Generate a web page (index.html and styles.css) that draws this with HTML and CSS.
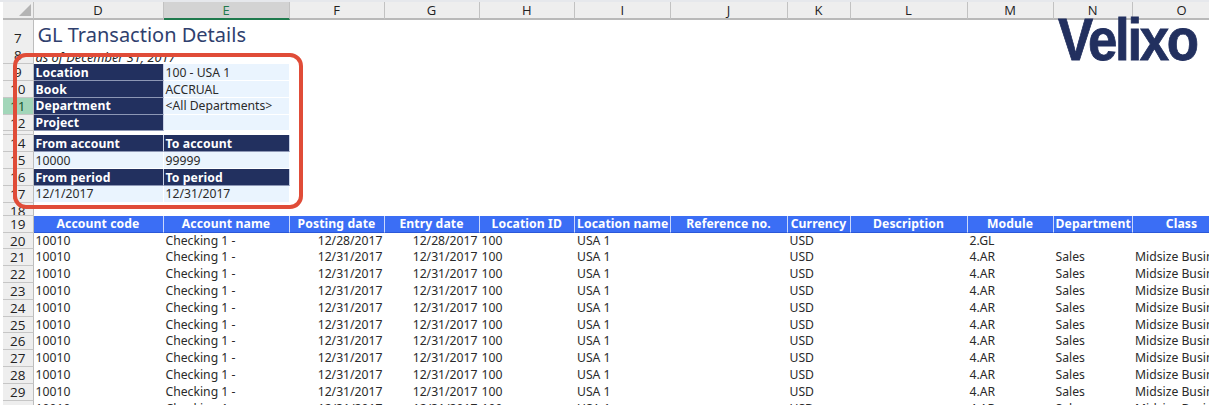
FILE: index.html
```html
<!DOCTYPE html>
<html lang="en">
<head>
<meta charset="utf-8">
<title>GL Transaction Details</title>
<link rel="stylesheet" href="styles.css">
</head>
<body>
<div class="sheet">
  <div class="row col-head">
    <div class="corner"><svg class="corner-mark" width="12" height="12" viewBox="0 0 12 12"><path d="M12 0V12H0Z" fill="#b4b4b4"/></svg></div>
    <div>D</div><div class="col-sel">E</div><div>F</div><div>G</div><div>H</div><div>I</div><div>J</div><div>K</div><div>L</div><div>M</div><div>N</div><div>O</div>
  </div>
  <div class="row r-title"><div class="rn">7</div><div class="title">GL Transaction Details</div></div>
  <div class="row"><div class="rn">8</div><div class="subtitle">as of December 31, 2017</div></div>
  <div class="row"><div class="rn">9</div><div class="lab">Location</div><div class="val">100 - USA 1</div></div>
  <div class="row"><div class="rn">10</div><div class="lab">Book</div><div class="val">ACCRUAL</div></div>
  <div class="row"><div class="rn rn-sel">11</div><div class="lab">Department</div><div class="val">&lt;All Departments&gt;</div></div>
  <div class="row"><div class="rn">12</div><div class="lab">Project</div><div class="val"></div></div>
  <div class="row r-thin"><div class="rn"></div></div>
  <div class="row"><div class="rn">14</div><div class="lab">From account</div><div class="lab">To account</div></div>
  <div class="row"><div class="rn">15</div><div class="val">10000</div><div class="val">99999</div></div>
  <div class="row"><div class="rn">16</div><div class="lab">From period</div><div class="lab">To period</div></div>
  <div class="row"><div class="rn">17</div><div class="val">12/1/2017</div><div class="val">12/31/2017</div></div>
  <div class="row r-gap"><div class="rn">18</div></div>
  <div class="row r-head">
    <div class="rn">19</div>
    <div class="th">Account code</div><div class="th">Account name</div><div class="th">Posting date</div><div class="th">Entry date</div><div class="th">Location ID</div><div class="th">Location name</div><div class="th">Reference no.</div><div class="th">Currency</div><div class="th">Description</div><div class="th">Module</div><div class="th">Department</div><div class="th">Class</div>
  </div>
  <div class="row"><div class="rn">20</div><div>10010</div><div>Checking 1 -</div><div class="num">12/28/2017</div><div class="num">12/28/2017</div><div>100</div><div>USA 1</div><div></div><div>USD</div><div></div><div>2.GL</div></div>
  <div class="row"><div class="rn">21</div><div>10010</div><div>Checking 1 -</div><div class="num">12/31/2017</div><div class="num">12/31/2017</div><div>100</div><div>USA 1</div><div></div><div>USD</div><div></div><div>4.AR</div><div>Sales</div><div>Midsize Business</div></div>
  <div class="row"><div class="rn">22</div><div>10010</div><div>Checking 1 -</div><div class="num">12/31/2017</div><div class="num">12/31/2017</div><div>100</div><div>USA 1</div><div></div><div>USD</div><div></div><div>4.AR</div><div>Sales</div><div>Midsize Business</div></div>
  <div class="row"><div class="rn">23</div><div>10010</div><div>Checking 1 -</div><div class="num">12/31/2017</div><div class="num">12/31/2017</div><div>100</div><div>USA 1</div><div></div><div>USD</div><div></div><div>4.AR</div><div>Sales</div><div>Midsize Business</div></div>
  <div class="row"><div class="rn">24</div><div>10010</div><div>Checking 1 -</div><div class="num">12/31/2017</div><div class="num">12/31/2017</div><div>100</div><div>USA 1</div><div></div><div>USD</div><div></div><div>4.AR</div><div>Sales</div><div>Midsize Business</div></div>
  <div class="row"><div class="rn">25</div><div>10010</div><div>Checking 1 -</div><div class="num">12/31/2017</div><div class="num">12/31/2017</div><div>100</div><div>USA 1</div><div></div><div>USD</div><div></div><div>4.AR</div><div>Sales</div><div>Midsize Business</div></div>
  <div class="row"><div class="rn">26</div><div>10010</div><div>Checking 1 -</div><div class="num">12/31/2017</div><div class="num">12/31/2017</div><div>100</div><div>USA 1</div><div></div><div>USD</div><div></div><div>4.AR</div><div>Sales</div><div>Midsize Business</div></div>
  <div class="row"><div class="rn">27</div><div>10010</div><div>Checking 1 -</div><div class="num">12/31/2017</div><div class="num">12/31/2017</div><div>100</div><div>USA 1</div><div></div><div>USD</div><div></div><div>4.AR</div><div>Sales</div><div>Midsize Business</div></div>
  <div class="row"><div class="rn">28</div><div>10010</div><div>Checking 1 -</div><div class="num">12/31/2017</div><div class="num">12/31/2017</div><div>100</div><div>USA 1</div><div></div><div>USD</div><div></div><div>4.AR</div><div>Sales</div><div>Midsize Business</div></div>
  <div class="row"><div class="rn">29</div><div>10010</div><div>Checking 1 -</div><div class="num">12/31/2017</div><div class="num">12/31/2017</div><div>100</div><div>USA 1</div><div></div><div>USD</div><div></div><div>4.AR</div><div>Sales</div><div>Midsize Business</div></div>
  <div class="row"><div class="rn">30</div><div>10010</div><div>Checking 1 -</div><div class="num">12/31/2017</div><div class="num">12/31/2017</div><div>100</div><div>USA 1</div><div></div><div>USD</div><div></div><div>4.AR</div><div>Sales</div><div>Midsize Business</div></div>
  <div class="logo">Velixo</div>
  <div class="callout"></div>
</div>
</body>
</html>
```
FILE: styles.css
```css
* { box-sizing: border-box; }
html, body { margin: 0; padding: 0; background: #fff; }
body { width: 1209px; height: 405px; overflow: hidden; }

.sheet {
  position: relative;
  width: 1209px;
  height: 405px;
  overflow: hidden;
  padding-top: 2px;
  background: #fff;
  font: 12.2px/16.8px "Noto Sans", sans-serif;
  color: #2a2a2a;
}
.sheet::before {
  content: "";
  position: absolute;
  left: 0;
  top: 0;
  width: 100%;
  height: 2px;
  background: #e6e8ec;
}

.row {
  display: grid;
  grid-template-columns: 33.5px 130px 126px 95px 95px 95.5px 95.5px 117px 63px 117px 86px 79.5px 98px;
  height: 16.8px;
}
.row > div {
  min-width: 0;
  padding: 0 2px;
  white-space: nowrap;
  overflow: hidden;
}

.col-head { height: 18px; }
.col-head > div {
  background: #eeeeee;
  border-right: 1px solid #c2c2c2;
  border-bottom: 2px solid #b9b9b9;
  text-align: center;
  font: 13px/16px "Open Sans", sans-serif;
  color: #222;
  padding: 0;
}
.col-head > .col-sel {
  background: #d3d3d3;
  border-bottom-color: #1f7a4d;
  color: #1f7a4d;
}
.col-head > .corner {
  position: relative;
  margin-left: 3px;
  border-right: 1px solid #c2c2c2;
}
.corner-mark { position: absolute; right: 2px; bottom: 2px; }

.r-title { height: 27.4px; }
.r-thin { height: 4px; }
.r-gap { height: 13.2px; }
.r-gap .rn { line-height: 9px; }

.row > .rn {
  margin-left: 3px;
  background: #eeeeee;
  border-bottom: 1px solid #c6c6c6;
  border-right: 1px solid #bdbdbd;
  text-align: center;
  padding: 0;
  font: 13.5px/16px "Open Sans", sans-serif;
  color: #222;
}
.row.r-title > .rn { line-height: 37px; }
.row > .rn-sel { background: #a2d6b9; color: #14532f; }

.row > .title {
  grid-column: 2 / span 4;
  padding-left: 4px;
  font-size: 20px;
  line-height: 29px;
  color: #2f3f6e;
  overflow: visible;
}
.row > .subtitle {
  grid-column: 2 / span 3;
  font-style: italic;
  font-size: 12.8px;
  line-height: 20px;
}

.row > .lab {
  padding-top: 0.7px;
  background: #22305f;
  color: #fff;
  font-weight: 700;
  letter-spacing: 0.1px;
  border-right: 1px solid #c9d2e6;
  border-bottom: 1px solid #8d97b5;
}
.row > .val {
  padding-top: 0.7px;
  background: #eaf4fe;
  border-right: 1px solid #fff;
  border-bottom: 1px solid #fff;
}

.row > .th {
  background: #3b6ef5;
  color: #fff;
  font-weight: 700;
  letter-spacing: 0.1px;
  text-align: center;
  border-right: 1px solid #cbd8fb;
  border-bottom: 1px solid #2b58d8;
}
.row > .num { text-align: right; }

.logo {
  position: absolute;
  right: 12px;
  top: 4px;
  font: 700 60px/72px "Liberation Sans", sans-serif;
  letter-spacing: -2.6px;
  color: #22305f;
  -webkit-text-stroke: 0.8px #22305f;
  transform: scaleX(0.88);
  transform-origin: right center;
}
.callout {
  position: absolute;
  left: 13px;
  top: 53px;
  width: 290px;
  height: 156px;
  border: 4px solid #e04c38;
  border-radius: 13px;
}
```
